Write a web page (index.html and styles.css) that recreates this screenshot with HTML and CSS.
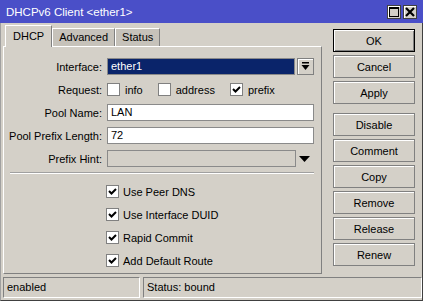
FILE: index.html
```html
<!DOCTYPE html>
<html lang="en">
<head>
    <meta charset="UTF-8">
    <title>DHCPv6 Client &lt;ether1&gt;</title>
    <link rel="stylesheet" href="styles.css">
</head>
<body>
    <div class="window">
        <!-- Title bar -->
        <div class="titlebar">
            <span class="title">DHCPv6 Client &lt;ether1&gt;</span>
            <div class="title-buttons">
                <span class="tbtn">
                    <svg width="10" height="10" viewBox="0 0 10 10"><rect x="0.5" y="0.5" width="9" height="9" fill="none" stroke="#000"/><rect x="0" y="0" width="10" height="2" fill="#000"/></svg>
                </span>
                <span class="tbtn">
                    <svg width="10" height="10" viewBox="0 0 10 10"><path d="M1 1 L9 9 M9 1 L1 9" stroke="#000" stroke-width="2.2"/></svg>
                </span>
            </div>
        </div>

        <div class="content">
            <div class="left">
                <!-- Tabs -->
                <div class="tabs">
                    <div class="tab active">DHCP</div>
                    <div class="tab">Advanced</div>
                    <div class="tab">Status</div>
                </div>

                <div class="panel">
                    <div class="row">
                        <label class="label">Interface:</label>
                        <div class="field selected">ether1</div>
                        <span class="dropbtn">
                            <svg width="9" height="9" viewBox="0 0 9 9"><rect x="1" y="0" width="7" height="1.5" fill="#000"/><path d="M0.5 3 H8.5 L4.5 8 Z" fill="#000"/></svg>
                        </span>
                    </div>

                    <div class="row">
                        <label class="label">Request:</label>
                        <span class="check"></span><span class="opt">info</span>
                        <span class="check"></span><span class="opt">address</span>
                        <span class="check on"></span><span class="opt">prefix</span>
                    </div>

                    <div class="row">
                        <label class="label">Pool Name:</label>
                        <div class="field wide">LAN</div>
                    </div>

                    <div class="row">
                        <label class="label">Pool Prefix Length:</label>
                        <div class="field wide">72</div>
                    </div>

                    <div class="row">
                        <label class="label">Prefix Hint:</label>
                        <div class="field disabled"></div>
                        <span class="arrow">
                            <svg width="11" height="6" viewBox="0 0 11 6"><path d="M0 0 H11 L5.5 6 Z" fill="#000"/></svg>
                        </span>
                    </div>

                    <div class="separator"></div>

                    <div class="flags">
                        <div class="flag"><span class="check on"></span>Use Peer DNS</div>
                        <div class="flag"><span class="check on"></span>Use Interface DUID</div>
                        <div class="flag"><span class="check on"></span>Rapid Commit</div>
                        <div class="flag"><span class="check on"></span>Add Default Route</div>
                    </div>
                </div>
            </div>

            <!-- Buttons -->
            <div class="buttons">
                <button class="default">OK</button>
                <button>Cancel</button>
                <button>Apply</button>
                <button class="group">Disable</button>
                <button>Comment</button>
                <button>Copy</button>
                <button>Remove</button>
                <button>Release</button>
                <button>Renew</button>
            </div>
        </div>

        <!-- Status bar -->
        <div class="statusbar">
            <div class="status first">enabled</div>
            <div class="status">Status: bound</div>
        </div>
    </div>
</body>
</html>
```

FILE: styles.css
```css
body {
    margin: 0;
    font-family: "Liberation Sans", Arial, sans-serif;
    font-size: 11px;
    color: #000;
    background-color: #d4d0c8;
}

.window {
    width: 423px;
    height: 301px;
    box-sizing: border-box;
    border-left: 1px solid #a0a0a0;
    border-right: 1px solid #404040;
    border-bottom: 1px solid #404040;
    background-color: #d4d0c8;
}

.titlebar {
    height: 23px;
    margin-left: -1px;
    margin-right: -1px;
    background-color: #4a4fc8;
    display: flex;
    align-items: center;
    justify-content: space-between;
    padding: 0 6px 0 6px;
}

.title {
    color: #fff;
    font-size: 11.5px;
}

.title-buttons {
    display: flex;
    gap: 2px;
}

.tbtn {
    width: 14px;
    height: 14px;
    box-sizing: border-box;
    background-color: #d4d0c8;
    border: 1px solid #404040;
    box-shadow: inset 1px 1px 0 #fff;
    display: flex;
    align-items: center;
    justify-content: center;
}

.content {
    display: flex;
    padding: 2px 0 0 2px;
}

.left {
    width: 319px;
}

.tabs {
    display: flex;
    align-items: flex-end;
    height: 21px;
    padding-left: 2px;
}

.tab {
    height: 18px;
    line-height: 17px;
    box-sizing: border-box;
    padding: 0 6px;
    border: 1px solid #fff;
    border-right-color: #808080;
    border-bottom: none;
    background-color: #c6c2ba;
}

.tab.active {
    height: 22px;
    line-height: 20px;
    margin-bottom: -1px;
    padding: 0 7px;
    background-color: #d4d0c8;
    position: relative;
    z-index: 1;
}

.panel {
    height: 228px;
    box-sizing: border-box;
    border: 1px solid #fff;
    border-right-color: #808080;
    border-bottom-color: #808080;
    padding-top: 11px;
}

.row {
    display: flex;
    align-items: center;
    height: 17px;
    margin-bottom: 6px;
}

.label {
    width: 98px;
    text-align: right;
    margin-right: 5px;
    white-space: nowrap;
}

.field {
    height: 17px;
    box-sizing: border-box;
    border: 1px solid #8a8a8a;
    background-color: #fff;
    padding-left: 3px;
    line-height: 15px;
}

.field.selected {
    width: 188px;
    background-color: #0a246a;
    color: #fff;
}

.field.wide {
    width: 207px;
}

.field.disabled {
    width: 189px;
    background-color: #d4d0c8;
}

.dropbtn {
    width: 17px;
    height: 17px;
    box-sizing: border-box;
    margin-left: 2px;
    border: 1px solid #808080;
    box-shadow: inset 1px 1px 0 #fff;
    display: flex;
    align-items: center;
    justify-content: center;
}

.arrow {
    margin-left: 3px;
    display: flex;
}

.check {
    width: 13px;
    height: 13px;
    box-sizing: border-box;
    border: 1px solid #808080;
    background-color: #fff;
    flex-shrink: 0;
}

.check.on {
    background-image: url("data:image/svg+xml;utf8,<svg xmlns='http://www.w3.org/2000/svg' width='11' height='11' viewBox='0 0 11 11'><path d='M2 5 L4.5 7.5 L9 3' fill='none' stroke='black' stroke-width='2'/></svg>");
    background-repeat: no-repeat;
}

.opt {
    margin: 0 15px 0 5px;
}

.separator {
    margin: -1px 7px 6px 6px;
    height: 0;
    border-top: 1px solid #a0a0a0;
    border-bottom: 1px solid #fff;
}

.flag {
    display: flex;
    align-items: center;
    height: 23px;
    padding-left: 102px;
}

.flag .check {
    margin-right: 4px;
}

.buttons {
    display: flex;
    flex-direction: column;
    gap: 3px;
    margin-left: 11px;
    padding-top: 4px;
}

button {
    width: 82px;
    height: 23px;
    padding: 0;
    font-family: "Liberation Sans", Arial, sans-serif;
    font-size: 11px;
    color: #000;
    background-color: #d4d0c8;
    border: 1px solid #808080;
    box-shadow: inset 1px 1px 0 #fff;
}

button.default {
    border: 1px solid #000;
    box-shadow: inset 1px 1px 0 #fff, inset -1px -1px 0 #808080;
}

button.group {
    margin-top: 6px;
}

.statusbar {
    display: flex;
    gap: 3px;
    padding: 3px 0 0 2px;
}

.status {
    height: 21px;
    line-height: 19px;
    box-sizing: border-box;
    border: 1px solid #808080;
    border-right-color: #fff;
    border-bottom-color: #fff;
    padding-left: 3px;
    flex: 1;
}

.status.first {
    flex: none;
    width: 137px;
}
```
